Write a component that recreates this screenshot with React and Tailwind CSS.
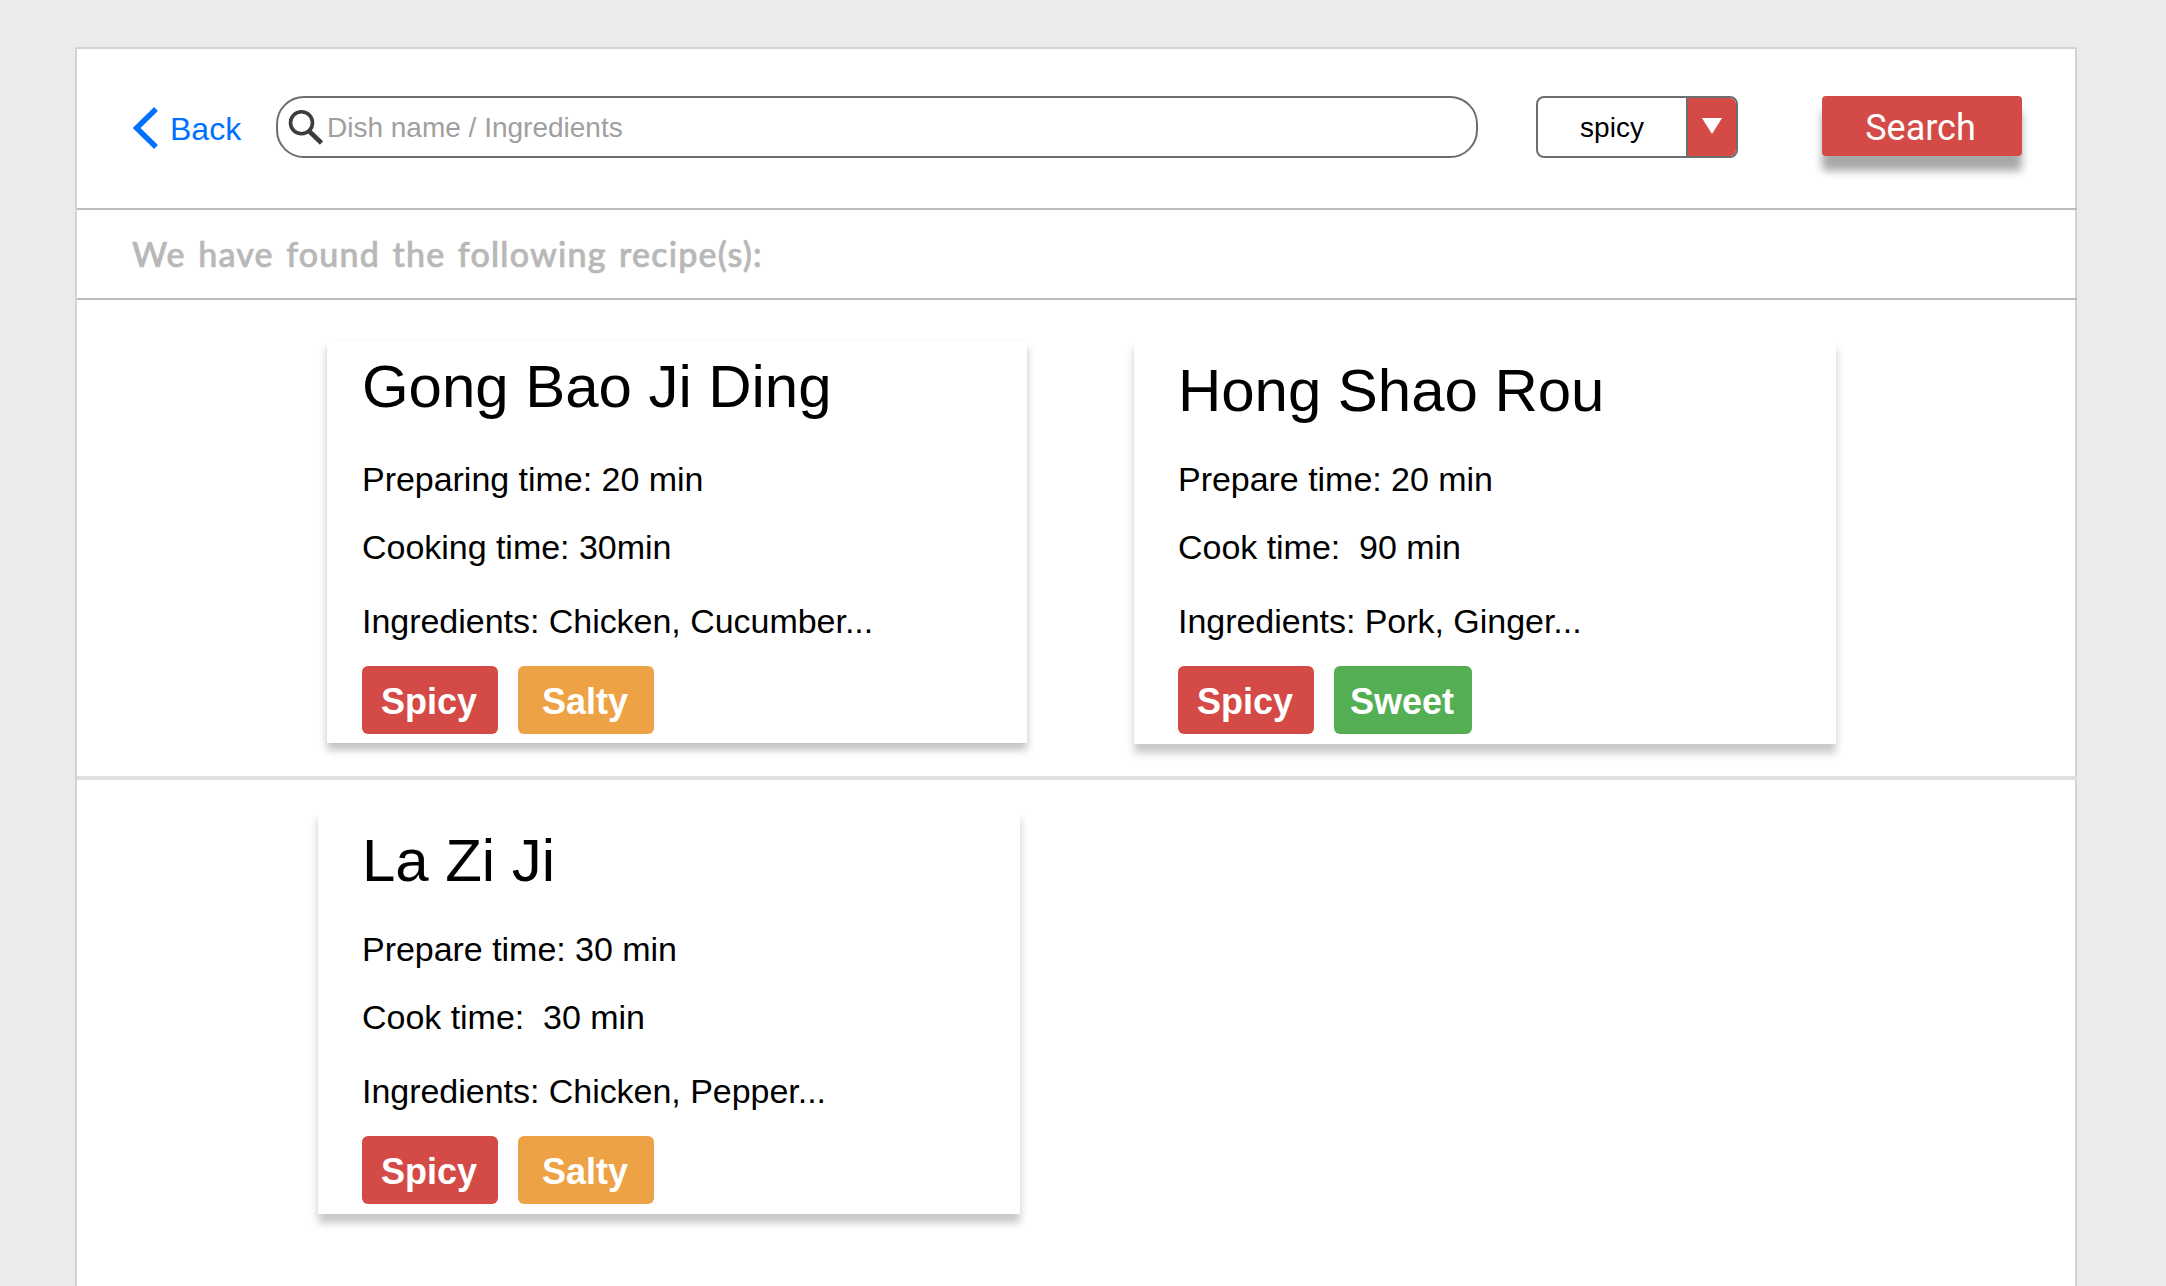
const RECIPES = [
  {
    name: "Gong Bao Ji Ding",
    prepare: "Preparing time: 20 min",
    cook: "Cooking time: 30min",
    ingredients: "Ingredients: Chicken, Cucumber...",
    tags: ["Spicy", "Salty"],
    card: "ml-[250px] mt-[41px] h-[402px] w-[700px] pl-[35px] pt-4 shadow-[0_7px_8px_rgba(0,0,0,0.24),0_0_2px_rgba(0,0,0,0.04)]",
    title: "mb-[42px]",
  },
  {
    name: "Hong Shao Rou",
    prepare: "Prepare time: 20 min",
    cook: "Cook time:  90 min",
    ingredients: "Ingredients: Pork, Ginger...",
    tags: ["Spicy", "Sweet"],
    card: "ml-[107px] mt-10 h-[404px] w-[702px] pl-11 pt-[21px] shadow-[0_9px_8px_rgba(0,0,0,0.22)]",
    title: "mb-[38px]",
  },
  {
    name: "La Zi Ji",
    prepare: "Prepare time: 30 min",
    cook: "Cook time:  30 min",
    ingredients: "Ingredients: Chicken, Pepper...",
    tags: ["Spicy", "Salty"],
    card: "ml-[241px] mt-[30px] h-[404px] w-[702px] pl-11 pt-[21px] shadow-[0_9px_8px_rgba(0,0,0,0.22)]",
    title: "mb-[38px]",
  },
];

const TAGS = {
  Spicy: "w-[136px] bg-[#d44a46]",
  Salty: "w-[136px] bg-[#eda345]",
  Sweet: "w-[138px] bg-[#54ae53]",
};

function RecipeCard({ recipe }) {
  return (
    <article className={`shrink-0 bg-white whitespace-pre ${recipe.card}`}>
      <h2 className={`text-[60px] leading-[60px] tracking-[-0.05px] ${recipe.title}`}>{recipe.name}</h2>
      <div className="text-[34px] leading-10 tracking-[-0.03px]">
        <p>{recipe.prepare}</p>
        <p className="mt-7">{recipe.cook}</p>
        <p className="mt-[34px]">{recipe.ingredients}</p>
      </div>
      <div className="mt-[25px] flex gap-5">
        {recipe.tags.map((tag) => (
          <span
            key={tag}
            className={`flex h-[68px] items-center justify-center rounded-[6px] pt-[3px] pr-[2px] text-[36px] leading-none font-bold text-white ${TAGS[tag]}`}
          >
            {tag}
          </span>
        ))}
      </div>
    </article>
  );
}

export default function App() {
  return (
    <div className="h-[1286px] w-[2166px] overflow-hidden bg-[#ebebeb] pt-[47px] pl-[75px] font-['Liberation_Sans',Arial,sans-serif] text-black">
      <main className="h-[1300px] w-[2002px] border-x-2 border-t-2 border-[#d4d4d4] bg-white">
        <header className="-mr-0.5 flex h-[161px] items-start border-b-2 border-[#bcbcbc] pt-[47px]">
          <a className="ml-14 flex h-[62px] w-[143px] items-center text-[32px] text-[#0070ff]">
            <svg className="mt-[2px] h-[42px] w-[26px]" viewBox="0 0 26 42" fill="none">
              <path d="M23 2 L3.6 21 L23 40" stroke="currentColor" strokeWidth="5.4" />
            </svg>
            <span className="ml-[11px] pt-[3px] leading-none">Back</span>
          </a>
          <div className="flex h-[62px] w-[1202px] items-center rounded-[28px] border-2 border-[#6e6e6e] pl-[10px] text-[28px] text-[#9f9f9f]">
            <svg className="h-9 w-9" viewBox="0 0 36 36" fill="none" stroke="#3c3c3c">
              <circle cx="13.5" cy="13.8" r="11" strokeWidth="3.6" />
              <path d="M21.5 22.5 L33.5 34" strokeWidth="4.6" />
            </svg>
            <span className="ml-[3px] pt-[2px] leading-none">Dish name / Ingredients</span>
          </div>
          <div className="ml-[58px] flex h-[62px] w-[202px] overflow-hidden rounded-[8px] border-2 border-[#6e6e6e]">
            <span className="flex flex-1 items-center justify-center pt-[2px] text-[28px] leading-none">spicy</span>
            <span className="flex w-[50px] items-center justify-center border-l-2 border-[#6e6e6e] bg-[#d44a46]">
              <svg className="mb-[2px] h-4 w-5" viewBox="0 0 20 16">
                <path d="M0 0 H20 L10 16 Z" fill="#fff" />
              </svg>
            </span>
          </div>
          <button className="ml-[84px] flex h-[60px] w-[200px] items-center justify-center rounded-[4px] bg-[#d44a46] pt-1 pr-[3px] font-['Roboto'] text-[36px] leading-none text-white shadow-[0_15px_8px_rgba(0,0,0,0.34)]">
            Search
          </button>
        </header>
        <p className="-mr-0.5 h-[90px] border-b-2 border-[#bcbcbc] pt-[22px] pl-[55px] font-['Lato'] text-[34px] leading-[44px] font-medium tracking-[1.2px] text-[#b8b8b8] [-webkit-text-stroke:0.7px_#b8b8b8] [word-spacing:2.6px]">
          We have found the following recipe(s):
        </p>
        <section className="-mr-0.5 flex h-[480px] items-start border-b-4 border-[#e0e0e0]">
          <RecipeCard recipe={RECIPES[0]} />
          <RecipeCard recipe={RECIPES[1]} />
        </section>
        <section className="flex items-start">
          <RecipeCard recipe={RECIPES[2]} />
        </section>
      </main>
    </div>
  );
}
